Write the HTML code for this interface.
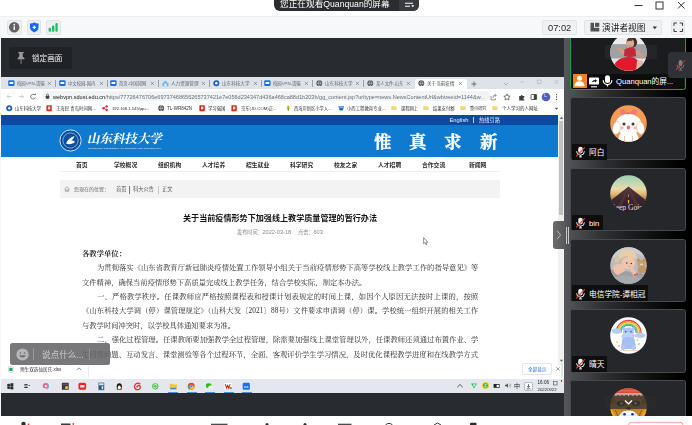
<!DOCTYPE html><html><head><meta charset="utf-8"><title>meeting</title><style>
html,body{margin:0;padding:0}
html{overflow:hidden}body{width:692px;height:425px;overflow:hidden;position:relative;background:#fff;font-family:"Liberation Sans",sans-serif}
#scr{position:absolute;left:0;top:0;width:692px;height:425px;filter:blur(.28px)}
#scr text{font-family:"Liberation Sans","Noto Sans CJK SC",sans-serif}
#scr text.sf{font-family:"Liberation Serif","Noto Serif CJK SC",serif}
</style></head><body><div id="scr"><div style="position:absolute;left:0px;top:0px;width:692px;height:16px;background:#ffffff;"></div>
<div style="position:absolute;left:0px;top:16px;width:692px;height:22px;background:#f7f8f9;border-top:1px solid #ededee;box-sizing:border-box"></div>
<div style="position:absolute;left:1px;top:38px;width:563px;height:378px;background:#282b2f;"></div>
<div style="position:absolute;left:0px;top:38px;width:1px;height:378px;background:#f6f7f8;"></div>
<div style="position:absolute;left:274px;top:-6px;width:145px;height:17px;background:#2b2c30;border-radius:6px"></div>
<div style="position:absolute;left:399px;top:-6px;width:20px;height:17px;background:#3a3b40;border-radius:0 6px 6px 0"></div>
<svg width="1" height="1" style="position:absolute;left:279.5px;top:6.7px;overflow:visible;"><text x="0" y="0" font-size="8.67" fill="#ffffff">您正在观看Quanquan的屏幕</text></svg>
<svg style="position:absolute;left:404px;top:1px;overflow:visible;" width="12" height="8" viewBox="0 0 12 8"><path d="M1 2.2h8M1 5.2h5" stroke="#fff" stroke-width="1.1" fill="none"/><path d="M7.2 4.3h3.2l-1.6 1.9z" fill="#fff"/></svg>
<svg style="position:absolute;left:632px;top:0px;overflow:visible;" width="60" height="14" viewBox="0 0 60 14"><path d="M2.5 5.5h8" stroke="#333" stroke-width="1"/><rect x="24" y="2" width="7" height="7" fill="none" stroke="#333" stroke-width="1"/><path d="M46 2l6.5 6.5M52.5 2L46 8.5" stroke="#333" stroke-width="1"/></svg>
<div style="position:absolute;left:7px;top:20px;width:14.5px;height:14.5px;background:#eeeff1;border:1px solid #e2e3e6;border-radius:2px;box-sizing:border-box"></div>
<div style="position:absolute;left:26.5px;top:20px;width:14.5px;height:14.5px;background:#eeeff1;border:1px solid #e2e3e6;border-radius:2px;box-sizing:border-box"></div>
<div style="position:absolute;left:46px;top:20px;width:14.5px;height:14.5px;background:#eeeff1;border:1px solid #e2e3e6;border-radius:2px;box-sizing:border-box"></div>
<svg style="position:absolute;left:7px;top:20px;overflow:visible;" width="14.5" height="14.5" viewBox="0 0 14.5 14.5"><circle cx="7.25" cy="7.25" r="5.200" fill="#626367"/><rect x="6.55" y="6.3" width="1.4" height="3.7" fill="#fff"/><circle cx="7.25" cy="4.7" r="0.85" fill="#fff"/></svg>
<svg style="position:absolute;left:26.5px;top:20px;overflow:visible;" width="14.5" height="14.5" viewBox="0 0 14.5 14.5"><path d="M7.25 2.3c1.6 1 3 1.3 4.3 1.3v3.6c0 2.6-2 4.3-4.3 5.2-2.300-.9-4.300-2.600-4.300-5.200V3.600c1.300 0 2.700-.3 4.300-1.300z" fill="#1268fb"/><path d="M7.25 5.6v3.400M5.550 7.300h3.400" stroke="#fff" stroke-width="1.2"/></svg>
<svg style="position:absolute;left:46px;top:20px;overflow:visible;" width="14.5" height="14.5" viewBox="0 0 14.5 14.5"><rect x="2.600" y="7.800" width="2.300" height="4" rx="1" fill="#10c65a"/><rect x="6" y="5.600" width="2.300" height="6.200" rx="1" fill="#10c65a"/><rect x="9.400" y="3" width="2.300" height="8.800" rx="1" fill="#10c65a"/></svg>
<div style="position:absolute;left:542px;top:20px;width:34.5px;height:14.5px;background:#f0f1f2;border:1px solid #e3e4e6;border-radius:2px;box-sizing:border-box"></div>
<div style="position:absolute;left:548px;top:23.6px;font:9.3px/9.3px 'Liberation Sans',sans-serif;color:#2c2c2e;white-space:nowrap;">07:02</div>
<div style="position:absolute;left:583.8px;top:20px;width:78.2px;height:14.5px;background:#f0f1f2;border:1px solid #e3e4e6;border-radius:2px;box-sizing:border-box"></div>
<svg style="position:absolute;left:589.5px;top:22px;overflow:visible;" width="10" height="10" viewBox="0 0 10 10"><path d="M.5.800h3.500v5h5.300v3.700H.5z" fill="#505257"/><rect x="5" y=".8" width="4.300" height="4" fill="#505257"/></svg>
<svg width="1" height="1" style="position:absolute;left:601.5px;top:30.7px;overflow:visible;"><text x="0" y="0" font-size="8.7" fill="#1c1c1e">演讲者视图</text></svg>
<svg style="position:absolute;left:651.5px;top:25.5px;overflow:visible;" width="6" height="4" viewBox="0 0 6 4"><path d="M.6.600h4.400L2.800 3.200z" fill="#333"/></svg>
<div style="position:absolute;left:670.5px;top:20px;width:14.5px;height:14.5px;background:#f0f1f2;border:1px solid #e3e4e6;border-radius:2px;box-sizing:border-box"></div>
<svg style="position:absolute;left:670.5px;top:20px;overflow:visible;" width="14.5" height="14.5" viewBox="0 0 14.5 14.5"><path d="M3 5.800V3.500c0-.3.200-.5.500-.5h2.300M8.700 3h2.300c.3 0 .5.200.5.500v2.300M11.500 8.700v2.300c0 .3-.2.500-.5.500H8.700M5.800 11.500H3.500c-.3 0-.5-.2-.5-.5V8.700" fill="none" stroke="#3a3b3f" stroke-width="1.100"/></svg>
<div style="position:absolute;left:9px;top:47px;width:63px;height:21.5px;background:#212225;border-radius:2.500px"></div>
<svg style="position:absolute;left:16px;top:50.5px;overflow:visible;" width="10" height="14" viewBox="0 0 10 14"><path d="M2.300 1h5.400v1.200H6.700v3.400l1.800 1.600v1H5.400v4.300L5 13.300l-.4-.8V8.200H1.500v-1l1.800-1.600V2.200H2.300z" fill="#9a9b9e"/></svg>
<svg width="1" height="1" style="position:absolute;left:31.8px;top:60.8px;overflow:visible;"><text x="0" y="0" font-size="7.6" fill="#f0f0f0">锁定画面</text></svg>
<div id="share" style="position:absolute;left:1px;top:77px;width:563px;height:316px;background:#fff;overflow:hidden;filter:blur(.3px)">
<div style="position:absolute;left:0px;top:0px;width:563px;height:12px;background:#dee2e9;"></div>
<div style="position:absolute;left:414px;top:1.5px;width:51.5px;height:10.5px;background:#ffffff;border-radius:3px 3px 0 0"></div>
<svg style="position:absolute;left:6.8px;top:3px;overflow:visible;" width="7" height="6.5" viewBox="0 0 7 6.5"><rect x=".2" y=".2" width="6.400" height="5.800" rx="1.200" fill="#1d6fd6"/><rect x="1.500" y="1.900" width="3.800" height="2.100" rx=".3" fill="#fff"/></svg>
<svg width="1" height="1" style="position:absolute;left:15.8px;top:8.3px;overflow:visible;"><text x="0" y="0" font-size="4.34" fill="#62666c">校园VPN-请输</text></svg>
<svg style="position:absolute;left:46.3px;top:4px;overflow:visible;" width="5" height="5" viewBox="0 0 5 5"><path d="M.8.800l3.200 3.200M4 .8L.8 4" stroke="#6a6e75" stroke-width=".6"/></svg>
<div style="position:absolute;left:54.3px;top:2.5px;width:0.5px;height:7px;background:#9aa0a8;"></div>
<svg style="position:absolute;left:58.1px;top:3px;overflow:visible;" width="7" height="6.5" viewBox="0 0 7 6.5"><rect x=".2" y=".2" width="6.400" height="5.800" rx="1.200" fill="#1d6fd6"/><rect x="1.500" y="1.900" width="3.800" height="2.100" rx=".3" fill="#fff"/></svg>
<svg width="1" height="1" style="position:absolute;left:67.1px;top:8.3px;overflow:visible;"><text x="0" y="0" font-size="4.32" fill="#62666c">中文校园-国内</text></svg>
<svg style="position:absolute;left:97.6px;top:4px;overflow:visible;" width="5" height="5" viewBox="0 0 5 5"><path d="M.8.800l3.200 3.200M4 .8L.8 4" stroke="#6a6e75" stroke-width=".6"/></svg>
<div style="position:absolute;left:105.6px;top:2.5px;width:0.5px;height:7px;background:#9aa0a8;"></div>
<svg style="position:absolute;left:109.4px;top:3px;overflow:visible;" width="7" height="6.5" viewBox="0 0 7 6.5"><rect x=".2" y=".2" width="6.400" height="5.800" rx="1.200" fill="#1d6fd6"/><rect x="1.500" y="1.900" width="3.800" height="2.100" rx=".3" fill="#fff"/></svg>
<svg width="1" height="1" style="position:absolute;left:118.4px;top:8.3px;overflow:visible;"><text x="0" y="0" font-size="4.32" fill="#62666c">首页-中国知网</text></svg>
<svg style="position:absolute;left:148.9px;top:4px;overflow:visible;" width="5" height="5" viewBox="0 0 5 5"><path d="M.8.800l3.200 3.200M4 .8L.8 4" stroke="#6a6e75" stroke-width=".6"/></svg>
<div style="position:absolute;left:156.9px;top:2.5px;width:0.5px;height:7px;background:#9aa0a8;"></div>
<svg style="position:absolute;left:160.7px;top:3px;overflow:visible;" width="7" height="6.5" viewBox="0 0 7 6.5"><path d="M.4 3.400L3.400.5l3 2.900v2.800H.4z" fill="#6db4e8"/><rect x="2.400" y="3.500" width="2" height="2.700" fill="#e8f4fc"/></svg>
<svg width="1" height="1" style="position:absolute;left:169.7px;top:8.3px;overflow:visible;"><text x="0" y="0" font-size="4.58" fill="#62666c">人力资源管理</text></svg>
<svg style="position:absolute;left:200.2px;top:4px;overflow:visible;" width="5" height="5" viewBox="0 0 5 5"><path d="M.8.800l3.200 3.200M4 .8L.8 4" stroke="#6a6e75" stroke-width=".6"/></svg>
<div style="position:absolute;left:208.2px;top:2.5px;width:0.5px;height:7px;background:#9aa0a8;"></div>
<svg style="position:absolute;left:212px;top:3px;overflow:visible;" width="7" height="6.5" viewBox="0 0 7 6.5"><circle cx="3.300" cy="3.200" r="3" fill="#1a5fc4"/><circle cx="3.300" cy="3.200" r="1.300" fill="#fff"/></svg>
<svg width="1" height="1" style="position:absolute;left:221px;top:8.3px;overflow:visible;"><text x="0" y="0" font-size="4.58" fill="#62666c">山东科技大学</text></svg>
<svg style="position:absolute;left:251.5px;top:4px;overflow:visible;" width="5" height="5" viewBox="0 0 5 5"><path d="M.8.800l3.200 3.200M4 .8L.8 4" stroke="#6a6e75" stroke-width=".6"/></svg>
<div style="position:absolute;left:259.5px;top:2.5px;width:0.5px;height:7px;background:#9aa0a8;"></div>
<svg style="position:absolute;left:263.3px;top:3px;overflow:visible;" width="7" height="6.5" viewBox="0 0 7 6.5"><rect x=".2" y=".2" width="6.400" height="5.800" rx="1.200" fill="#1d6fd6"/><rect x="1.500" y="1.900" width="3.800" height="2.100" rx=".3" fill="#fff"/></svg>
<svg width="1" height="1" style="position:absolute;left:272.3px;top:8.3px;overflow:visible;"><text x="0" y="0" font-size="4.34" fill="#62666c">校园VPN-请输</text></svg>
<svg style="position:absolute;left:302.8px;top:4px;overflow:visible;" width="5" height="5" viewBox="0 0 5 5"><path d="M.8.800l3.200 3.200M4 .8L.8 4" stroke="#6a6e75" stroke-width=".6"/></svg>
<div style="position:absolute;left:310.8px;top:2.5px;width:0.5px;height:7px;background:#9aa0a8;"></div>
<svg style="position:absolute;left:314.6px;top:3px;overflow:visible;" width="7" height="6.5" viewBox="0 0 7 6.5"><circle cx="3.300" cy="3.200" r="2.900" fill="#4a4d52"/><path d="M.8 3.200h5M3.300.5c-1.500 1.500-1.500 4 0 5.400M3.300.5c1.500 1.500 1.500 4 0 5.400" stroke="#e8eaee" stroke-width=".5" fill="none"/></svg>
<svg width="1" height="1" style="position:absolute;left:323.6px;top:8.3px;overflow:visible;"><text x="0" y="0" font-size="4.58" fill="#62666c">山东科技大学</text></svg>
<svg style="position:absolute;left:354.1px;top:4px;overflow:visible;" width="5" height="5" viewBox="0 0 5 5"><path d="M.8.800l3.200 3.200M4 .8L.8 4" stroke="#6a6e75" stroke-width=".6"/></svg>
<div style="position:absolute;left:362.1px;top:2.5px;width:0.5px;height:7px;background:#9aa0a8;"></div>
<svg style="position:absolute;left:365.9px;top:3px;overflow:visible;" width="7" height="6.5" viewBox="0 0 7 6.5"><circle cx="3.300" cy="3.200" r="2.900" fill="#4a4d52"/><path d="M.8 3.200h5M3.300.5c-1.500 1.500-1.500 4 0 5.400M3.300.5c1.500 1.500 1.500 4 0 5.400" stroke="#e8eaee" stroke-width=".5" fill="none"/></svg>
<svg width="1" height="1" style="position:absolute;left:374.9px;top:8.3px;overflow:visible;"><text x="0" y="0" font-size="4.32" fill="#62666c">某人文件-山东</text></svg>
<svg style="position:absolute;left:405.4px;top:4px;overflow:visible;" width="5" height="5" viewBox="0 0 5 5"><path d="M.8.800l3.200 3.200M4 .8L.8 4" stroke="#6a6e75" stroke-width=".6"/></svg>
<svg style="position:absolute;left:417.2px;top:3px;overflow:visible;" width="7" height="6.5" viewBox="0 0 7 6.5"><circle cx="3.300" cy="3.200" r="2.900" fill="#4a4d52"/><path d="M.8 3.200h5M3.300.5c-1.500 1.500-1.500 4 0 5.400M3.300.5c1.500 1.500 1.500 4 0 5.400" stroke="#e8eaee" stroke-width=".5" fill="none"/></svg>
<svg width="1" height="1" style="position:absolute;left:426.2px;top:8.3px;overflow:visible;"><text x="0" y="0" font-size="4.58" fill="#3a3d42">关于当前疫情</text></svg>
<svg style="position:absolute;left:456.7px;top:4px;overflow:visible;" width="5" height="5" viewBox="0 0 5 5"><path d="M.8.800l3.200 3.200M4 .8L.8 4" stroke="#6a6e75" stroke-width=".6"/></svg>
<svg style="position:absolute;left:470px;top:3.5px;overflow:visible;" width="6" height="6" viewBox="0 0 6 6"><path d="M3 .5v5M.5 3h5" stroke="#555" stroke-width=".8"/></svg>
<svg style="position:absolute;left:501.5px;top:4.5px;overflow:visible;" width="6" height="4" viewBox="0 0 6 4"><path d="M.8.800l2.200 2.200L5.200.8" stroke="#9aa0a8" stroke-width=".7" fill="none"/></svg>
<svg style="position:absolute;left:517px;top:2px;overflow:visible;" width="44" height="6" viewBox="0 0 44 6"><path d="M2 3h4" stroke="#a9aeb6" stroke-width=".6"/><rect x="19.500" y="1" width="3.600" height="3.600" fill="none" stroke="#a9aeb6" stroke-width=".6"/><path d="M36.500 1l4 4M40.500 1l-4 4" stroke="#a9aeb6" stroke-width=".6"/></svg>
<div style="position:absolute;left:0px;top:12px;width:563px;height:13.5px;background:#ffffff;"></div>
<div style="position:absolute;left:40.5px;top:14.3px;width:448px;height:10px;background:#f1f3f4;border-radius:5px"></div>
<svg style="position:absolute;left:4px;top:15px;overflow:visible;" width="36" height="9" viewBox="0 0 36 9"><path d="M6.500 4.500H2.200M4 2.500L2 4.500l2 2" stroke="#c2c5ca" stroke-width=".8" fill="none"/><path d="M14 4.500h4.300M16.500 2.500l2 2-2 2" stroke="#c2c5ca" stroke-width=".8" fill="none"/><path d="M30 3.200a2.400 2.400 0 1 0 .4 2.100" stroke="#55595e" stroke-width=".75" fill="none"/><path d="M29 3h1.800V1.200z" fill="#55595e"/></svg>
<svg style="position:absolute;left:44px;top:16px;overflow:visible;" width="5" height="7" viewBox="0 0 5 7"><rect x=".8" y="2.800" width="3.400" height="2.900" rx=".4" fill="#3c4043"/><path d="M1.500 2.900V2a1 1 0 0 1 2 0v.9" stroke="#3c4043" stroke-width=".6" fill="none"/></svg>
<svg style="position:absolute;left:51.5px;top:14.5px;overflow:visible" width="440" height="10"><text x="0" y="6.600" font-family="Liberation Sans,sans-serif" font-size="5.900" textLength="432" lengthAdjust="spacingAndGlyphs"><tspan fill="#202124">webvpn.sdust.edu.cn</tspan><tspan fill="#6a6e74">/htt</tspan><tspan fill="#6a6e74">ps/77726476706e69737468656265737421e7e056d234347d436a468ca88d1b203b/gg_content.jsp?urltype=news.NewsContentUrl&amp;wbtreeid=1144&amp;w...</tspan></text></svg>
<svg style="position:absolute;left:489px;top:15.5px;overflow:visible;" width="8" height="8" viewBox="0 0 8 8"><path d="M1 3.200v3.600h4.500V5.500M3.200 5V3.400c0-.6.400-1 1-1h1.600M4.800 1l1.400 1.400L4.800 3.800" stroke="#5f6368" stroke-width=".7" fill="none"/></svg>
<svg style="position:absolute;left:501.5px;top:15.5px;overflow:visible;" width="8" height="8" viewBox="0 0 8 8"><path d="M4 .9l.95 2.100 2.250.25-1.700 1.500.5 2.250L4 5.850 2 7l.5-2.250-1.700-1.500 2.250-.25z" stroke="#44474c" stroke-width=".7" fill="none"/></svg>
<svg style="position:absolute;left:516.5px;top:15.5px;overflow:visible;" width="8" height="8" viewBox="0 0 8 8"><path d="M1.200 3h1.600a.9.900 0 1 1 1.800 0h1.700v1.600a.9.900 0 1 0 0 1.800V7.400H1.200z" fill="#3c4043"/></svg>
<svg style="position:absolute;left:528.5px;top:15.5px;overflow:visible;" width="8" height="8" viewBox="0 0 8 8"><rect x="1" y="1.500" width="5.600" height="5" rx=".6" fill="none" stroke="#3c4043" stroke-width=".8"/><rect x="3.800" y="1.500" width="2.800" height="5" fill="#3c4043"/></svg>
<svg style="position:absolute;left:539.5px;top:14.5px;overflow:visible;" width="10" height="10" viewBox="0 0 10 10"><circle cx="5" cy="5" r="4.300" fill="#4f5ec4"/></svg>
<div style="position:absolute;left:543.3px;top:17px;font:4.8px/4.8px 'Liberation Sans',sans-serif;color:#e8eaf6;white-space:nowrap;">L</div>
<svg style="position:absolute;left:554px;top:15.5px;overflow:visible;" width="3" height="8" viewBox="0 0 3 8"><circle cx="1.500" cy="1.600" r=".65" fill="#44474c"/><circle cx="1.500" cy="4" r=".65" fill="#44474c"/><circle cx="1.500" cy="6.400" r=".65" fill="#44474c"/></svg>
<div style="position:absolute;left:0px;top:25.5px;width:563px;height:12px;background:#ffffff;"></div>
<svg style="position:absolute;left:5px;top:28px;overflow:visible;" width="6.5" height="6.5" viewBox="0 0 6.5 6.5"><circle cx="3.200" cy="3.200" r="3" fill="#1a5fc4"/><circle cx="3.200" cy="3.200" r="1.200" fill="#fff"/></svg>
<svg width="1" height="1" style="position:absolute;left:14px;top:33.3px;overflow:visible;"><text x="0" y="0" font-size="4.34" fill="#2e3135">山东科技大学</text></svg>
<svg style="position:absolute;left:45px;top:28px;overflow:visible;" width="6.5" height="6.5" viewBox="0 0 6.5 6.5"><rect x=".4" y=".2" width="5.400" height="6" rx=".4" fill="#e02b20"/><rect x="2" y="1.600" width="2.200" height="2.800" fill="#fff" opacity=".85"/></svg>
<svg width="1" height="1" style="position:absolute;left:55px;top:33.3px;overflow:visible;"><text x="0" y="0" font-size="4.38" fill="#2e3135">王海民 青岛时间网...</text></svg>
<svg style="position:absolute;left:101px;top:28px;overflow:visible;" width="6.5" height="6.5" viewBox="0 0 6.5 6.5"><circle cx="1.500" cy="3.200" r="1.200" fill="#e03030"/><circle cx="4.700" cy="1.400" r="1.200" fill="#e03030"/><circle cx="4.700" cy="5" r="1.200" fill="#e03030"/><path d="M1.500 3.200L4.700 1.400M1.500 3.200L4.700 5" stroke="#e03030" stroke-width=".8"/></svg>
<svg width="1" height="1" style="position:absolute;left:111px;top:33.3px;overflow:visible;"><text x="0" y="0" font-size="4.2" fill="#2e3135">192.168.1.145/jqu...</text></svg>
<svg style="position:absolute;left:157px;top:28px;overflow:visible;" width="6.5" height="6.5" viewBox="0 0 6.5 6.5"><circle cx="3.200" cy="3.200" r="2.900" fill="#3c4043"/><path d="M.6 3.200h5.200M3.200.4c-1.400 1.400-1.400 4 0 5.600M3.200.4c1.400 1.400 1.400 4 0 5.600" stroke="#fff" stroke-width=".5" fill="none"/></svg>
<svg width="1" height="1" style="position:absolute;left:166px;top:33.3px;overflow:visible;"><text x="0" y="0" font-size="4.52" fill="#2e3135">TL-WR842N</text></svg>
<svg style="position:absolute;left:198px;top:28px;overflow:visible;" width="6.5" height="6.5" viewBox="0 0 6.5 6.5"><rect x=".4" y=".2" width="5.400" height="6" rx=".4" fill="#d9241b"/><rect x="2" y="1.600" width="2.200" height="2.800" fill="#fff" opacity=".85"/></svg>
<svg width="1" height="1" style="position:absolute;left:207px;top:33.3px;overflow:visible;"><text x="0" y="0" font-size="4.38" fill="#2e3135">学习强国</text></svg>
<svg style="position:absolute;left:230px;top:28px;overflow:visible;" width="6.5" height="6.5" viewBox="0 0 6.5 6.5"><rect x=".4" y=".2" width="5.400" height="6" rx=".4" fill="#d62c25"/><rect x="2" y="1.600" width="2.200" height="2.800" fill="#fff" opacity=".85"/></svg>
<svg width="1" height="1" style="position:absolute;left:240px;top:33.3px;overflow:visible;"><text x="0" y="0" font-size="4.28" fill="#2e3135">京东(JD.COM)正...</text></svg>
<svg style="position:absolute;left:284px;top:28px;overflow:visible;" width="6.5" height="6.5" viewBox="0 0 6.5 6.5"><path d="M3.200.3c1.600 1.200 2 3.500 0 5.900-2-2.400-1.600-4.700 0-5.900z" fill="#f4b400"/><path d="M3.200 2.500c1 .8 1.200 2.200 0 3.700z" fill="#33a853"/></svg>
<svg width="1" height="1" style="position:absolute;left:293px;top:33.3px;overflow:visible;"><text x="0" y="0" font-size="4.28" fill="#2e3135">西海岸新区小学入...</text></svg>
<svg style="position:absolute;left:337px;top:28px;overflow:visible;" width="6.5" height="6.5" viewBox="0 0 6.5 6.5"><path d="M.4 1.200h5.600L4.800 5.600H1.600z" fill="#1f6fd0"/><path d="M1.500 2.300h3.400" stroke="#fff" stroke-width=".6"/></svg>
<svg width="1" height="1" style="position:absolute;left:346px;top:33.3px;overflow:visible;"><text x="0" y="0" font-size="4.38" fill="#2e3135">小西工程教育专业...</text></svg>
<svg style="position:absolute;left:390px;top:28px;overflow:visible;" width="6" height="5.5" viewBox="0 0 6 5.5"><path d="M.3.900h2l.6.700h2.700v3.500H.3z" fill="#f4d678"/></svg>
<svg width="1" height="1" style="position:absolute;left:400px;top:33.3px;overflow:visible;"><text x="0" y="0" font-size="4.26" fill="#2e3135">课程网上</text></svg>
<svg style="position:absolute;left:422px;top:28px;overflow:visible;" width="6" height="5.5" viewBox="0 0 6 5.5"><path d="M.3.900h2l.6.700h2.700v3.500H.3z" fill="#f4d678"/></svg>
<svg width="1" height="1" style="position:absolute;left:432px;top:33.3px;overflow:visible;"><text x="0" y="0" font-size="4.3" fill="#2e3135">结果支付额</text></svg>
<svg style="position:absolute;left:459px;top:28px;overflow:visible;" width="6" height="5.5" viewBox="0 0 6 5.5"><path d="M.3.900h2l.6.700h2.700v3.500H.3z" fill="#f4d678"/></svg>
<svg width="1" height="1" style="position:absolute;left:469px;top:33.3px;overflow:visible;"><text x="0" y="0" font-size="4.12" fill="#2e3135">重点研究</text></svg>
<svg style="position:absolute;left:491px;top:28px;overflow:visible;" width="6" height="5.5" viewBox="0 0 6 5.5"><path d="M.3.900h2l.6.700h2.700v3.500H.3z" fill="#f4d678"/></svg>
<svg width="1" height="1" style="position:absolute;left:501px;top:33.3px;overflow:visible;"><text x="0" y="0" font-size="4.5" fill="#2e3135">个人学习的人网址</text></svg>
<svg style="position:absolute;left:552.5px;top:29.5px;overflow:visible;" width="5" height="4" viewBox="0 0 5 4"><path d="M.6.700h3.600L2.400 3z" fill="#5f6368"/></svg>
<div style="position:absolute;left:0px;top:37.5px;width:557px;height:10px;background:#0c4aa0;"></div>
<div style="position:absolute;left:0px;top:47.5px;width:557px;height:32px;background:#0e7bd0;"></div>
<div style="position:absolute;left:557px;top:37.5px;width:6px;height:250px;background:#f1f1f1;"></div>
<div style="position:absolute;left:557.7px;top:44px;width:4.7px;height:94px;background:#c1c1c2;"></div>
<svg style="position:absolute;left:557.5px;top:38.5px;overflow:visible;" width="5" height="4" viewBox="0 0 5 4"><path d="M.8 3L2.500.8 4.200 3z" fill="#6a6a6a"/></svg>
<svg style="position:absolute;left:557.5px;top:281.5px;overflow:visible;" width="5" height="4" viewBox="0 0 5 4"><path d="M.8.800h3.400L2.500 3z" fill="#6a6a6a"/></svg>
<div style="position:absolute;left:448.5px;top:39.7px;font:5.800px/6px 'Liberation Sans',sans-serif;color:#e6eefb;white-space:nowrap">English</div>
<div style="position:absolute;left:472px;top:40px;width:0.6px;height:5.5px;background:#bcd0ee;"></div>
<svg width="1" height="1" style="position:absolute;left:478px;top:44.8px;overflow:visible;"><text x="0" y="0" font-size="5.24" fill="#dfe9f8">热线引路</text></svg>
<svg style="position:absolute;left:58px;top:52px;overflow:visible;" width="23" height="23" viewBox="0 0 23 23"><circle cx="11.500" cy="11.500" r="10.600" fill="#0b509e" stroke="#dfeaf8" stroke-width=".9"/><circle cx="11.500" cy="11.500" r="7.600" fill="none" stroke="#cfe0f4" stroke-width=".6"/><path d="M7 14.500c2-4.500 5-6.500 8.500-7.500-1 2-1.500 3.500-3.500 4.500 2 0 3 .3 4 1.500-2.500 2-5.500 2.800-9 1.500z" fill="#fff"/></svg>
<svg width="1" height="1" style="position:absolute;left:85.5px;top:66.3px;overflow:visible;transform:skewX(-12deg);transform-origin:0 0"><text class="sf" x="0" y="0" font-size="12.5" font-weight="bold" fill="#ffffff">山东科技大学</text></svg>
<div style="position:absolute;left:87px;top:69.8px;font:bold 2.300px/3px 'Liberation Sans',sans-serif;color:#d8e6f7;white-space:nowrap;letter-spacing:.2px">SHANDONG UNIVERSITY OF SCIENCE AND TECHNOLOGY</div>
<svg width="1" height="1" style="position:absolute;left:373px;top:71px;overflow:visible;"><text class="sf" x="0" y="0" font-size="17.5" font-weight="bold" fill="#ffffff" stroke="#ffffff" stroke-width=".3">惟</text></svg>
<svg width="1" height="1" style="position:absolute;left:408.2px;top:71px;overflow:visible;"><text class="sf" x="0" y="0" font-size="17.5" font-weight="bold" fill="#ffffff" stroke="#ffffff" stroke-width=".3">真</text></svg>
<svg width="1" height="1" style="position:absolute;left:443.4px;top:71px;overflow:visible;"><text class="sf" x="0" y="0" font-size="17.5" font-weight="bold" fill="#ffffff" stroke="#ffffff" stroke-width=".3">求</text></svg>
<svg width="1" height="1" style="position:absolute;left:478.6px;top:71px;overflow:visible;"><text class="sf" x="0" y="0" font-size="17.5" font-weight="bold" fill="#ffffff" stroke="#ffffff" stroke-width=".3">新</text></svg>
<div style="position:absolute;left:0px;top:79.5px;width:557px;height:14.5px;background:#ffffff;"></div>
<div style="position:absolute;left:59px;top:94px;width:440px;height:0.7px;background:#f1f1f1;"></div>
<svg width="1" height="1" style="position:absolute;left:75px;top:90.2px;overflow:visible;"><text x="0" y="0" font-size="5.8" font-weight="bold" fill="#2b2b2b">首页</text></svg>
<svg width="1" height="1" style="position:absolute;left:113px;top:90.2px;overflow:visible;"><text x="0" y="0" font-size="5.8" font-weight="bold" fill="#2b2b2b">学校概况</text></svg>
<svg width="1" height="1" style="position:absolute;left:157px;top:90.2px;overflow:visible;"><text x="0" y="0" font-size="5.8" font-weight="bold" fill="#2b2b2b">组织机构</text></svg>
<svg width="1" height="1" style="position:absolute;left:201px;top:90.2px;overflow:visible;"><text x="0" y="0" font-size="5.8" font-weight="bold" fill="#2b2b2b">人才培养</text></svg>
<svg width="1" height="1" style="position:absolute;left:245px;top:90.2px;overflow:visible;"><text x="0" y="0" font-size="5.8" font-weight="bold" fill="#2b2b2b">招生就业</text></svg>
<svg width="1" height="1" style="position:absolute;left:289px;top:90.2px;overflow:visible;"><text x="0" y="0" font-size="5.8" font-weight="bold" fill="#2b2b2b">科学研究</text></svg>
<svg width="1" height="1" style="position:absolute;left:333px;top:90.2px;overflow:visible;"><text x="0" y="0" font-size="5.8" font-weight="bold" fill="#2b2b2b">校友之家</text></svg>
<svg width="1" height="1" style="position:absolute;left:377px;top:90.2px;overflow:visible;"><text x="0" y="0" font-size="5.8" font-weight="bold" fill="#2b2b2b">人才招聘</text></svg>
<svg width="1" height="1" style="position:absolute;left:421px;top:90.2px;overflow:visible;"><text x="0" y="0" font-size="5.8" font-weight="bold" fill="#2b2b2b">合作交流</text></svg>
<svg width="1" height="1" style="position:absolute;left:468px;top:90.2px;overflow:visible;"><text x="0" y="0" font-size="5.8" font-weight="bold" fill="#2b2b2b">新闻网</text></svg>
<div style="position:absolute;left:59px;top:103px;width:439.5px;height:17.5px;background:#f3f3f4;"></div>
<svg style="position:absolute;left:63px;top:109px;overflow:visible;" width="6" height="6" viewBox="0 0 6 6"><path d="M.6 3L3 .8 5.400 3M1.300 2.800v2.500h1.200V3.800h1v1.500h1.200V2.800" stroke="#777" stroke-width=".55" fill="none"/></svg>
<svg width="1" height="1" style="position:absolute;left:73px;top:114.2px;overflow:visible;"><text x="0" y="0" font-size="5" fill="#6b6b6b">您现在的位置：</text></svg>
<svg width="1" height="1" style="position:absolute;left:114.5px;top:114.2px;overflow:visible;"><text x="0" y="0" font-size="5.25" fill="#555">首页</text></svg>
<div style="position:absolute;left:127.8px;top:108.5px;width:0.7px;height:8px;background:#7a7a7a;"></div>
<svg width="1" height="1" style="position:absolute;left:131.6px;top:114.2px;overflow:visible;"><text x="0" y="0" font-size="5.25" fill="#555">科大公告</text></svg>
<div style="position:absolute;left:156.7px;top:108.5px;width:0.7px;height:8px;background:#c8c8c8;"></div>
<svg width="1" height="1" style="position:absolute;left:160.6px;top:114.2px;overflow:visible;"><text x="0" y="0" font-size="5.25" fill="#555">正文</text></svg>
<svg width="1" height="1" style="position:absolute;left:182px;top:144px;overflow:visible;"><text x="0" y="0" font-size="8.08" font-weight="bold" fill="#141414" textLength="194" lengthAdjust="spacing">关于当前疫情形势下加强线上教学质量管理的暂行办法</text></svg>
<svg width="1" height="1" style="position:absolute;left:236px;top:156.6px;overflow:visible;"><text x="0" y="0" font-size="5.14" fill="#8a8a8a">发布时间：</text></svg>
<div style="position:absolute;left:261.5px;top:151.7px;font:5.600px/6px 'Liberation Sans',sans-serif;color:#8a8a8a;white-space:nowrap">2022-03-18</div>
<svg width="1" height="1" style="position:absolute;left:297px;top:156.6px;overflow:visible;"><text x="0" y="0" font-size="5.28" fill="#8a8a8a">点击：</text></svg>
<div style="position:absolute;left:312.5px;top:151.7px;font:5.600px/6px 'Liberation Sans',sans-serif;color:#8a8a8a;white-space:nowrap">603</div>
<svg width="1" height="1" style="position:absolute;left:81px;top:179px;overflow:visible;"><text class="sf" x="0" y="0" font-size="7.34" font-weight="bold" fill="#1c1c1c">各教学单位：</text></svg>
<svg width="1" height="1" style="position:absolute;left:95.66px;top:193.05px;overflow:visible;"><text class="sf" x="0" y="0" font-size="7.33" fill="#2a2a2a" textLength="381.4" lengthAdjust="spacing">为贯彻落实《山东省教育厅新冠肺炎疫情处置工作领导小组关于当前疫情形势下高等学校线上教学工作的指导意见》等</text></svg>
<svg width="1" height="1" style="position:absolute;left:81px;top:207.5px;overflow:visible;"><text class="sf" x="0" y="0" font-size="7.29" fill="#2a2a2a" textLength="284.4" lengthAdjust="spacing">文件精神，确保当前疫情形势下高质量完成线上教学任务，结合学校实际，制定本办法。</text></svg>
<svg width="1" height="1" style="position:absolute;left:95.66px;top:221.95px;overflow:visible;"><text class="sf" x="0" y="0" font-size="7.34" fill="#2a2a2a" textLength="381.2" lengthAdjust="spacing">一、严格教学秩序。任课教师应严格按照课程表和授课计划表规定的时间上课，如因个人原因无法按时上课的，按照</text></svg>
<svg width="1" height="1" style="position:absolute;left:81px;top:236.4px;overflow:visible;"><text class="sf" x="0" y="0" font-size="7.3" fill="#2a2a2a" textLength="396.1" lengthAdjust="spacing">《山东科技大学调（停）课管理规定》（山科大发〔2021〕88号）文件要求申请调（停）课。学校统一组织开展的相关工作</text></svg>
<svg width="1" height="1" style="position:absolute;left:81px;top:250.85px;overflow:visible;"><text class="sf" x="0" y="0" font-size="7.29" fill="#2a2a2a" textLength="153.1" lengthAdjust="spacing">与教学时间冲突时，以学校具体通知要求为准。</text></svg>
<svg width="1" height="1" style="position:absolute;left:95.66px;top:265.3px;overflow:visible;"><text class="sf" x="0" y="0" font-size="7.33" fill="#2a2a2a" textLength="381.4" lengthAdjust="spacing">二、强化过程管理。任课教师要加强教学全过程管理，除需要加强线上课堂管理以外，任课教师还须通过布置作业、学</text></svg>
<svg width="1" height="1" style="position:absolute;left:81px;top:279.75px;overflow:visible;"><text class="sf" x="0" y="0" font-size="7.33" fill="#2a2a2a" textLength="396" lengthAdjust="spacing">生回答问题、互动发言、课堂测验等各个过程环节，全面、客观评价学生学习情况，及时优化课程教学进度和在线教学方式</text></svg>
<svg style="position:absolute;left:422px;top:159.5px;overflow:visible;" width="6" height="9" viewBox="0 0 6 9"><path d="M.6.600v6.200l1.500-1.300 1 2.200.9-.4-1-2.100h1.900z" fill="#fff" stroke="#333" stroke-width=".5"/></svg>
<div style="position:absolute;left:0px;top:287.5px;width:563px;height:14px;background:#ffffff;"></div>
<div style="position:absolute;left:559.8px;top:285.6px;width:2.4px;height:14px;background:#d8ecdb;"></div>
<svg style="position:absolute;left:6.5px;top:288.8px;overflow:visible;" width="6" height="7" viewBox="0 0 6 7"><rect x=".5" y=".5" width="4.800" height="5.800" rx=".6" fill="#fff" stroke="#9aa" stroke-width=".4"/><rect x="1.300" y="1.800" width="3.200" height="3.200" fill="#1fa463"/></svg>
<svg width="1" height="1" style="position:absolute;left:18.5px;top:293.8px;overflow:visible;"><text x="0" y="0" font-size="4.6" fill="#333">师生双选仙居氏.xlsx</text></svg>
<svg style="position:absolute;left:75px;top:290.3px;overflow:visible;" width="6" height="4" viewBox="0 0 6 4"><path d="M.8 3L3 .9 5.200 3" stroke="#555" stroke-width=".7" fill="none"/></svg>
<div style="position:absolute;left:87px;top:288.5px;width:0.6px;height:12px;background:#ebebeb;"></div>
<div style="position:absolute;left:521px;top:285.5px;width:29.5px;height:12.5px;background:#ffffff;border:.7px solid #e1e5ee;border-radius:2px;box-sizing:border-box"></div>
<svg width="1" height="1" style="position:absolute;left:526.5px;top:293.8px;overflow:visible;"><text x="0" y="0" font-size="4.62" fill="#1a66d6">全部显示</text></svg>
<svg style="position:absolute;left:553.7px;top:289.2px;overflow:visible;" width="6" height="6" viewBox="0 0 6 6"><path d="M1.300 1.300l3.400 3.400M4.700 1.300L1.300 4.700" stroke="#666" stroke-width=".6"/></svg>
<div style="position:absolute;left:0px;top:301.7px;width:563px;height:14.5px;background:#e4e8ee;"></div>
<svg style="position:absolute;left:5.2px;top:304.8px;overflow:visible" width="8.600" height="8.600" viewBox="0 0 10 10"><path d="M1.500 2.300l3-.4v2.900h-3zM5 1.800l3.500-.5v3.500H5zM1.500 5.300h3v2.900l-3-.4zM5 5.300h3.500v3.500L5 8.300z" fill="#2b2b2b"/></svg>
<svg style="position:absolute;left:22.2px;top:304.8px;overflow:visible" width="8.600" height="8.600" viewBox="0 0 10 10"><rect x="1.500" y="2.500" width="4" height="1.500" fill="#333"/><rect x="1.500" y="5.500" width="4" height="1.500" fill="#333"/><rect x="6.500" y="3.500" width="1.500" height="1" fill="#333"/></svg>
<svg style="position:absolute;left:40.7px;top:304.8px;overflow:visible" width="8.600" height="8.600" viewBox="0 0 10 10"><circle cx="4" cy="4.500" r="3.200" fill="#ee6a7a"/><path d="M4.500 1c2 0 3.700 1.600 3.700 3.800S6.500 8.800 5 8.800C7 7.500 7 3.500 4.500 1z" fill="#58b6e8"/><circle cx="4.500" cy="4.700" r="1.300" fill="#fff"/></svg>
<svg style="position:absolute;left:59.7px;top:304.8px;overflow:visible" width="8.600" height="8.600" viewBox="0 0 10 10"><rect x="1" y="1" width="8" height="8" rx=".6" fill="#3a3a3a"/><rect x="5" y="5" width="3" height="3" fill="#f6d23c"/><rect x="2" y="2.200" width="6" height=".9" fill="#6a6a6a"/></svg>
<svg style="position:absolute;left:77.2px;top:304.8px;overflow:visible" width="8.600" height="8.600" viewBox="0 0 10 10"><rect x=".5" y="1" width="9" height="8" rx="2" fill="#f5222d"/><rect x="2.500" y="3.500" width="5" height="3" rx=".5" fill="#fff" opacity=".9"/></svg>
<svg style="position:absolute;left:95.7px;top:304.8px;overflow:visible" width="8.600" height="8.600" viewBox="0 0 10 10"><rect x="1.500" y=".6" width="7" height="9" rx=".5" fill="#4d7ea8"/><rect x="2.500" y="1.600" width="5" height="2" fill="#dbe8f2"/><rect x="2.500" y="4.500" width="5" height="4" fill="#2d4c66"/><rect x="5.300" y="5" width="1.800" height="3" fill="#e8eef2"/></svg>
<svg style="position:absolute;left:113.7px;top:304.8px;overflow:visible" width="8.600" height="8.600" viewBox="0 0 10 10"><ellipse cx="5" cy="5.300" rx="3" ry="3.800" fill="#1a1a1a"/><ellipse cx="5" cy="6.500" rx="1.800" ry="2.200" fill="#fff"/><path d="M2 7.500c1.500 1.200 4.500 1.200 6 0l.3 1.200c-2 1-4.600 1-6.600 0z" fill="#e63a2e"/><ellipse cx="5" cy="4.300" rx="1.100" ry=".5" fill="#f5a623"/></svg>
<svg style="position:absolute;left:131.7px;top:304.8px;overflow:visible" width="8.600" height="8.600" viewBox="0 0 10 10"><path d="M8.500 2.500C7 1.300 4.500 1 2.800 2.800 1 4.600 1.500 7.500 3.500 8.500s4.500.3 5-2c.3-1.500-1-2.600-2.400-2.400C4.800 4.300 4.300 5.600 5 6.500" stroke="#e8252a" stroke-width="1.500" fill="none"/></svg>
<svg style="position:absolute;left:150.2px;top:304.8px;overflow:visible" width="8.600" height="8.600" viewBox="0 0 10 10"><circle cx="5" cy="5" r="3.600" fill="#4cc42a"/><path d="M3 5a2 2 0 0 1 3.600-1.200M7 5a2 2 0 0 1-3.600 1.200" stroke="#fff" stroke-width=".9" fill="none"/><path d="M6.200 2.500l1.200 1.300-1.700.3zM3.800 7.500L2.600 6.200l1.700-.3z" fill="#fff"/></svg>
<svg style="position:absolute;left:168.2px;top:304.8px;overflow:visible" width="8.600" height="8.600" viewBox="0 0 10 10"><path d="M.8 2h3l.8 1h4.600v5.500H.8z" fill="#f4c430"/><rect x="1.500" y="6.800" width="7" height="1.700" fill="#3b8de0"/></svg>
<svg style="position:absolute;left:185.7px;top:304.8px;overflow:visible" width="8.600" height="8.600" viewBox="0 0 10 10"><circle cx="5" cy="5" r="4" fill="#ea4335"/><path d="M5 5L1.500 3a4 4 0 0 0 1.700 5.600z" fill="#34a853"/><path d="M5 5l-1.800 3.600A4 4 0 0 0 9 5z" fill="#fbbc05"/><circle cx="5" cy="5" r="1.800" fill="#fff"/><circle cx="5" cy="5" r="1.400" fill="#4285f4"/></svg>
<svg style="position:absolute;left:204.2px;top:304.8px;overflow:visible" width="8.600" height="8.600" viewBox="0 0 10 10"><ellipse cx="4.300" cy="4.300" rx="3.300" ry="2.800" fill="#2dc100"/><ellipse cx="6.500" cy="6.200" rx="2.600" ry="2.200" fill="#f2f2f2"/></svg>
<svg style="position:absolute;left:222.7px;top:304.8px;overflow:visible" width="8.600" height="8.600" viewBox="0 0 10 10"><rect x=".8" y="1.300" width="8.400" height="7.400" rx="1" fill="#fff"/><path d="M1.500 2.500l1.600 4.500 1.200-3 1.200 3 1.600-4.500" stroke="#e5251d" stroke-width="1.200" fill="none"/><rect x="6.500" y="5.800" width="2.500" height="2.500" fill="#3faa3f"/></svg>
<svg style="position:absolute;left:240.7px;top:304.8px;overflow:visible" width="8.600" height="8.600" viewBox="0 0 10 10"><rect x=".8" y="1" width="8.400" height="8" rx="1.500" fill="#1e6fff"/><path d="M2.300 6.500c.5-1.800 1.800-1.800 2.700-.5.900-1.300 2.200-1.300 2.700.5z" fill="#fff"/></svg>
<div style="position:absolute;left:167px;top:315.2px;width:10px;height:0.8px;background:#4a90d9;"></div>
<div style="position:absolute;left:185.5px;top:315.2px;width:10px;height:0.8px;background:#4a90d9;"></div>
<div style="position:absolute;left:204px;top:315.2px;width:10px;height:0.8px;background:#4a90d9;"></div>
<div style="position:absolute;left:222.5px;top:315.2px;width:10px;height:0.8px;background:#4a90d9;"></div>
<div style="position:absolute;left:240.5px;top:315.2px;width:10px;height:0.8px;background:#4a90d9;"></div>
<svg style="position:absolute;left:454.5px;top:305.5px;overflow:visible;" width="8" height="6" viewBox="0 0 8 6"><path d="M1.200 4.200L4 1.500l2.800 2.700" stroke="#333" stroke-width=".8" fill="none"/></svg>
<svg style="position:absolute;left:469px;top:304.5px;overflow:visible;" width="8" height="8" viewBox="0 0 8 8"><path d="M1 1.500h6L4 6.500z" fill="#2fbf5a"/><path d="M3 2.500h2.600L4 5z" fill="#fff"/></svg>
<svg style="position:absolute;left:479.5px;top:303.5px;overflow:visible;" width="9" height="9" viewBox="0 0 9 9"><circle cx="4.500" cy="4.500" r="3.600" fill="#f2d21f"/><circle cx="4.500" cy="4.500" r="2.300" fill="#2f9e3a"/><path d="M3.400 3.600h2.200L3.400 5.500h2.200" stroke="#fff" stroke-width=".6" fill="none"/></svg>
<svg style="position:absolute;left:492px;top:305.500px;overflow:visible;" width="8" height="6" viewBox="0 0 8 6"><rect x=".6" y="1" width="6" height="3.800" fill="#222"/><rect x="3.600" y="1.800" width="2.300" height="2.200" fill="#fff"/></svg>
<svg style="position:absolute;left:503px;top:305px;overflow:visible;" width="8" height="7" viewBox="0 0 8 7"><path d="M1 2.700h1.300L4 1.200v4.600L2.300 4.300H1z" fill="#555"/><path d="M5 2.200c.6.700.6 1.900 0 2.600M6 1.400c1.100 1.200 1.100 3 0 4.200" stroke="#777" stroke-width=".5" fill="none"/></svg>
<svg width="1" height="1" style="position:absolute;left:512.5px;top:310.8px;overflow:visible;"><text x="0" y="0" font-size="6" fill="#222">中</text></svg>
<svg style="position:absolute;left:522.5px;top:304.5px;overflow:visible;" width="9" height="9" viewBox="0 0 9 9"><rect x=".8" y=".8" width="7.400" height="7.400" fill="#fff" stroke="#888" stroke-width=".5"/><path d="M4.500 2v3M3 4l1.500 1.500L6 4M2.500 6.800h4" stroke="#333" stroke-width=".7" fill="none"/></svg>
<div style="position:absolute;left:536.5px;top:303.3px;font:4.600px/5px 'Liberation Sans',sans-serif;color:#222;white-space:nowrap">16:06</div>
<div style="position:absolute;left:536.5px;top:309.8px;font:4.300px/5px 'Liberation Sans',sans-serif;color:#222;white-space:nowrap">2022/3/22</div>
<svg style="position:absolute;left:551.5px;top:303.5px;overflow:visible;" width="5" height="5" viewBox="0 0 5 5"><rect x=".6" y=".6" width="3.400" height="3.400" fill="none" stroke="#333" stroke-width=".5"/></svg>
<div style="position:absolute;left:559.5px;top:303px;width:1.6px;height:1.6px;background:#e81123;"></div>
</div>
<div style="position:absolute;left:564px;top:38px;width:140px;height:378px;background:linear-gradient(to right,#55575b 0,#4e5054 7px,#2e2f31 40px,#111112 85px,#000 115px);"></div>
<div style="position:absolute;left:564px;top:38px;width:140px;height:378px;overflow:hidden"><div style="position:absolute;left:-564px;top:-38px">
<div style="position:absolute;left:570px;top:26.25px;width:115.5px;height:63.4px;background:#1b1c1e;border:1px solid #16a04c;border-radius:2.500px;box-sizing:border-box"></div>
<div style="position:absolute;left:571.5px;top:73.7px;width:112.5px;height:15.3px;background:#0d0d0e;"></div>
<div style="position:absolute;left:572.5px;top:74px;width:14.5px;height:14px;background:#f5821f;"></div>
<svg style="position:absolute;left:574.3px;top:75.3px;overflow:visible;" width="11" height="12" viewBox="0 0 11 12"><circle cx="5.500" cy="3.300" r="2.500" fill="#fff"/><path d="M.5 11.200c0-3.300 2-5 5-5s5 1.700 5 5z" fill="#fff"/></svg>
<svg style="position:absolute;left:588px;top:75.5px;overflow:visible;" width="12" height="12" viewBox="0 0 12 12"><rect x="1" y="1.500" width="10" height="7" rx=".8" fill="#fff"/><path d="M4 6.500c.3-1.800 1.500-2.500 3-2.500V3l2 1.700L7 6.400v-1c-1.200 0-2.200.3-3 1.100z" fill="#111"/><path d="M3 10.800h6" stroke="#fff" stroke-width="1.100"/></svg>
<svg style="position:absolute;left:602px;top:75px;overflow:visible;" width="11" height="12" viewBox="0 0 11 12"><rect x="3" y=".3" width="5" height="7.600" rx="2.500" fill="#fff"/><path d="M1.200 5.300a4.300 4.300 0 0 0 8.600 0M5.500 9.800v1.600" stroke="#fff" stroke-width="1.250" fill="none"/></svg>
<svg width="1" height="1" style="position:absolute;left:615.8px;top:83.9px;overflow:visible;"><text x="0" y="0" font-size="7.64" fill="#ffffff">Quanquan的屏...</text></svg>
<div style="position:absolute;left:570px;top:97px;width:115.5px;height:63.4px;background:#26272a;border:1px solid #48494d;border-radius:2.500px;box-sizing:border-box"></div>
<div style="position:absolute;left:572px;top:143.8px;width:34.7px;height:15.8px;background:#0e0e0f;"></div>
<svg style="position:absolute;left:575px;top:146.2px;overflow:visible;" width="11" height="12" viewBox="0 0 11 12"><g transform="scale(1)"><rect x="3.200" y=".8" width="4.600" height="6.600" rx="2.300" fill="#ededee"/><path d="M1.600 5.300a3.900 3.900 0 0 0 7.800 0M5.500 9.200v1.500M4 10.900h3" stroke="#ededee" stroke-width="1" fill="none"/><path d="M1.200 10.300L9.800 1.400" stroke="#e8423a" stroke-width="1.100"/></g></svg>
<svg width="1" height="1" style="position:absolute;left:588.8px;top:155.2px;overflow:visible;"><text x="0" y="0" font-size="7.7" fill="#ffffff">阿白</text></svg>
<div style="position:absolute;left:570px;top:167.75px;width:115.5px;height:63.4px;background:#26272a;border:1px solid #48494d;border-radius:2.500px;box-sizing:border-box"></div>
<div style="position:absolute;left:572px;top:214.55px;width:30.7px;height:15.8px;background:#0e0e0f;"></div>
<svg style="position:absolute;left:575px;top:216.95px;overflow:visible;" width="11" height="12" viewBox="0 0 11 12"><g transform="scale(1)"><rect x="3.200" y=".8" width="4.600" height="6.600" rx="2.300" fill="#ededee"/><path d="M1.600 5.300a3.900 3.900 0 0 0 7.800 0M5.500 9.200v1.500M4 10.900h3" stroke="#ededee" stroke-width="1" fill="none"/><path d="M1.200 10.300L9.800 1.400" stroke="#e8423a" stroke-width="1.100"/></g></svg>
<svg width="1" height="1" style="position:absolute;left:588.8px;top:225.95px;overflow:visible;"><text x="0" y="0" font-size="7.7" fill="#ffffff">bin</text></svg>
<div style="position:absolute;left:570px;top:238.5px;width:115.5px;height:63.4px;background:#26272a;border:1px solid #48494d;border-radius:2.500px;box-sizing:border-box"></div>
<div style="position:absolute;left:572px;top:285.3px;width:75.7px;height:15.8px;background:#0e0e0f;"></div>
<svg style="position:absolute;left:575px;top:287.7px;overflow:visible;" width="11" height="12" viewBox="0 0 11 12"><g transform="scale(1)"><rect x="3.200" y=".8" width="4.600" height="6.600" rx="2.300" fill="#ededee"/><path d="M1.600 5.300a3.900 3.900 0 0 0 7.800 0M5.500 9.200v1.500M4 10.900h3" stroke="#ededee" stroke-width="1" fill="none"/><path d="M1.200 10.300L9.800 1.400" stroke="#e8423a" stroke-width="1.100"/></g></svg>
<svg width="1" height="1" style="position:absolute;left:588.8px;top:296.7px;overflow:visible;"><text x="0" y="0" font-size="7.7" fill="#ffffff">电信学院-谭相冠</text></svg>
<div style="position:absolute;left:570px;top:309.25px;width:115.5px;height:63.4px;background:#26272a;border:1px solid #48494d;border-radius:2.500px;box-sizing:border-box"></div>
<div style="position:absolute;left:572px;top:356.05px;width:34.7px;height:15.8px;background:#0e0e0f;"></div>
<svg style="position:absolute;left:575px;top:358.45px;overflow:visible;" width="11" height="12" viewBox="0 0 11 12"><g transform="scale(1)"><rect x="3.200" y=".8" width="4.600" height="6.600" rx="2.300" fill="#ededee"/><path d="M1.600 5.300a3.900 3.900 0 0 0 7.800 0M5.500 9.200v1.500M4 10.900h3" stroke="#ededee" stroke-width="1" fill="none"/><path d="M1.200 10.300L9.800 1.400" stroke="#e8423a" stroke-width="1.100"/></g></svg>
<svg width="1" height="1" style="position:absolute;left:588.8px;top:367.45px;overflow:visible;"><text x="0" y="0" font-size="7.7" fill="#ffffff">晴天</text></svg>
<div style="position:absolute;left:570px;top:380px;width:115.5px;height:63.4px;background:#26272a;border:1px solid #48494d;border-radius:2.500px;box-sizing:border-box"></div>
<svg style="position:absolute;left:609.5px;top:34.3px;overflow:visible;" width="37" height="37" viewBox="0 0 37 37"><defs><clipPath id="av1"><circle cx="18.500" cy="18.500" r="18.300"/></clipPath></defs><g clip-path="url(#av1)"><rect width="37" height="37" fill="#ececed"/><rect y="10" width="37" height="14.500" fill="#adadaf"/><rect y="24.500" width="37" height="13" fill="#e4e4e6"/>
<ellipse cx="21.800" cy="8.300" rx="5.300" ry="5.500" fill="#3b2b2a"/><ellipse cx="20.300" cy="9.300" rx="3.900" ry="4.300" fill="#dcaa92"/><path d="M17 6c1.500-2 4-2.500 6-1.500l-1 2.500c-1.500-.5-3-.3-4.500.5z" fill="#4a3836"/>
<path d="M7 14.500c1.500-2 3.500-1.500 5 0l4 3.500-2 3c-3-1.500-5-3.500-7-6.500z" fill="#dfa78c"/><path d="M25 16c3 0 6 2 8.500 5.500l-2.500 2c-2-2-4-3.500-7-4z" fill="#dfa78c"/>
<path d="M14.500 15.500c3-2 8-2.500 11-.5l.5 7c-4 1.500-8 1.500-12 0z" fill="#d42033"/><path d="M3 35c1-7 6-12 16-12 6 0 9 3 10 6l-4 9H3z" fill="#e2192c"/>
<path d="M27 27c2-1.500 5.500-1 7 2l-2 7-6 1z" fill="#e2b8a0"/><path d="M30 20c2-1 4 0 4.500 2l-2 3-3-1.500z" fill="#d8a890"/></g></svg>
<svg style="position:absolute;left:609.5px;top:105px;overflow:visible;" width="37" height="37" viewBox="0 0 37 37"><defs><clipPath id="av2"><circle cx="18.500" cy="18.500" r="18.300"/></clipPath></defs><g clip-path="url(#av2)"><rect width="37" height="37" fill="#f39b55"/>
<path d="M11 9.500c-2.500-4.500 1-7 4.500-3.500l2 3.500zM26 9.500c2.500-4.500-1-7-4.500-3.500l-2 3.500z" fill="#f0787c"/><circle cx="18.500" cy="9.300" r="2" fill="#e9656b"/>
<ellipse cx="18.500" cy="19.500" rx="13" ry="10.500" fill="#fff"/><ellipse cx="6.500" cy="23" rx="3.900" ry="6.500" fill="#fff" stroke="#c98a5a" stroke-width=".35" transform="rotate(10 6.500 23)"/><ellipse cx="30.500" cy="23" rx="3.900" ry="6.500" fill="#fff" stroke="#c98a5a" stroke-width=".35" transform="rotate(-10 30.500 23)"/>
<path d="M8 38c0-8 3-13 10.500-13S29 30 29 38z" fill="#fff"/>
<circle cx="14" cy="19" r="1.500" fill="#5a2d16"/><circle cx="23" cy="19" r="1.500" fill="#5a2d16"/><ellipse cx="18.500" cy="22.500" rx="1.700" ry="2.100" fill="#ef6b73"/>
<circle cx="12" cy="22.800" r="1.600" fill="#f9b6b6"/><circle cx="25" cy="22.800" r="1.600" fill="#f9b6b6"/>
<path d="M14.500 31v7M22.500 31v7" stroke="#d9a07a" stroke-width=".6"/></g></svg>
<svg style="position:absolute;left:609.5px;top:175.25px;overflow:visible;" width="37" height="37" viewBox="0 0 37 37"><defs><clipPath id="av3"><circle cx="18.500" cy="18.500" r="18.300"/></clipPath></defs><g clip-path="url(#av3)"><defs><linearGradient id="sky" x1="0" y1="0" x2="0" y2="1"><stop offset="0" stop-color="#9fcfb4"/><stop offset=".28" stop-color="#cfd9b2"/><stop offset=".38" stop-color="#ecd9a8"/><stop offset=".52" stop-color="#e0b66e"/><stop offset=".72" stop-color="#9a6a44"/><stop offset="1" stop-color="#3a2630"/></linearGradient>
<linearGradient id="road" x1="0" y1="0" x2="0" y2="1"><stop offset="0" stop-color="#5a3a3c"/><stop offset=".5" stop-color="#3b2631"/><stop offset="1" stop-color="#2c1b28"/></linearGradient></defs>
<rect width="37" height="37" fill="url(#sky)"/><path d="M18.500 11.500L-14 37h65z" fill="url(#road)"/><path d="M18.500 12L4 37h6zM18.500 12l14.500 25h-6z" fill="#6a4a40" opacity=".35"/>
<rect x="18.100" y="19.500" width=".8" height="2.200" fill="#e8b04a"/><rect x="17.900" y="25" width="1.300" height="3.400" fill="#f0b43a"/>
<text x="18.500" y="35" style="font-family:'Liberation Serif',serif" font-size="7.600" fill="#eadfe0" text-anchor="middle">Keep Going</text></g></svg>
<svg style="position:absolute;left:609.5px;top:246.5px;overflow:visible;" width="37" height="37" viewBox="0 0 37 37"><defs><clipPath id="av4"><circle cx="18.500" cy="18.500" r="18.300"/></clipPath></defs><g clip-path="url(#av4)"><rect width="37" height="37" fill="#bcbcbe"/><path d="M0 0h37v10L22 5 0 12z" fill="#cdcdcf"/>
<path d="M-1 24c6-3 12-3 16 0l8 1c5 0 9 1 15 4v9H-1z" fill="#9fa0a3"/><path d="M3 31c8-3 20-3 30 1v6H3z" fill="#a9aaad"/>
<path d="M3 20c2-3 7-4 11-2l1 6-7 4c-3-1-5-4-5-8z" fill="#f0c2aa"/>
<ellipse cx="18.500" cy="16" rx="6.600" ry="6.200" fill="#f1c6ae"/>
<path d="M8.500 13.500c-1-7 5-11.500 11-10.500 5 .8 8 5 7 9.500-5-3.500-11-3.500-18 1z" fill="#e6cfa4"/><path d="M9 13c3-2.500 6-3.500 9-3.500" stroke="#cdb384" stroke-width=".7" fill="none"/><path d="M5.500 15.500c-1.500-2.500-.5-5 2-5l1.500 4.500zM14 3.500l1.500-2.300 2 2z" fill="#e2c698"/>
<path d="M22 21c2.500 1 4.500 4 5 7.500l-3 1.500c-1-3-2.500-5-4.500-6z" fill="#f0c0a8"/><rect x="23.700" y="26.800" width="4.200" height="1.700" rx=".8" fill="#e2505a" transform="rotate(-18 26 27.500)"/>
<ellipse cx="31.500" cy="16.500" rx="4.300" ry="3.800" fill="#c8a070"/><circle cx="28.500" cy="13.200" r="1.600" fill="#bd935f"/><circle cx="34.500" cy="13.200" r="1.600" fill="#bd935f"/><ellipse cx="32" cy="22.500" rx="4.200" ry="3.800" fill="#c19865"/><ellipse cx="31.500" cy="17.500" rx="1.600" ry="1.100" fill="#e6d2b0"/>
<circle cx="16.800" cy="16" r=".75" fill="#3a3232"/><circle cx="21.300" cy="16.500" r=".75" fill="#3a3232"/><ellipse cx="19.500" cy="19.500" rx="1.100" ry=".6" fill="#d98a80"/></g></svg>
<svg style="position:absolute;left:609.5px;top:317.25px;overflow:visible;" width="37" height="37" viewBox="0 0 37 37"><defs><clipPath id="av5"><circle cx="18.500" cy="18.500" r="18.300"/></clipPath></defs><g clip-path="url(#av5)"><rect width="37" height="37" fill="#ffffff"/>
<path d="M6 16a12.500 12.500 0 0 1 25 0" fill="none" stroke="#e8403a" stroke-width="1.300"/><path d="M7.300 16a11.200 11.200 0 0 1 22.400 0" fill="none" stroke="#f5a623" stroke-width="1.200"/><path d="M8.500 16a10 10 0 0 1 20 0" fill="none" stroke="#f3dc3a" stroke-width="1.100"/><path d="M9.600 16a8.900 8.900 0 0 1 17.800 0" fill="none" stroke="#55c06a" stroke-width="1.100"/><path d="M10.700 16a7.800 7.800 0 0 1 15.600 0" fill="none" stroke="#4a90e2" stroke-width="1.100"/>
<ellipse cx="6.500" cy="14" rx="5" ry="2.800" fill="#b4cdf5"/><ellipse cx="30" cy="18.500" rx="5.500" ry="2.600" fill="#b4cdf5"/>
<ellipse cx="18.500" cy="15" rx="5.500" ry="4.500" fill="#a9c3f6"/><circle cx="13.500" cy="11.500" r="1.500" fill="#a9c3f6"/><circle cx="23.500" cy="11.500" r="1.500" fill="#a9c3f6"/>
<ellipse cx="18" cy="19.500" rx="6.500" ry="4.300" fill="#bcd2fa"/><path d="M12 24c0-3 3-4 6.500-4s6.500 1 6.500 4l1 8H11z" fill="#a6c0f5"/><rect x="11.500" y="28" width="3.500" height="5" rx="1.500" fill="#b0c8f7"/><rect x="21.500" y="28" width="3.500" height="5" rx="1.500" fill="#b0c8f7"/>
<circle cx="15.800" cy="14.800" r=".7" fill="#2a3a7a"/><circle cx="21" cy="14.800" r=".7" fill="#2a3a7a"/><circle cx="23.500" cy="18.500" r="1" fill="#f4a0b5"/>
<circle cx="7" cy="25" r="1" fill="#f3dc6a"/><circle cx="29" cy="27" r="1" fill="#9ad3a0"/><circle cx="9" cy="29" r=".9" fill="#f4a0b5"/><circle cx="27.500" cy="23" r=".9" fill="#f7c66a"/>
<path d="M8 33.500h21" stroke="#f5c9a8" stroke-width=".8"/></g></svg>
<svg style="position:absolute;left:609.5px;top:388px;overflow:visible;" width="37" height="37" viewBox="0 0 37 37"><defs><clipPath id="av6"><circle cx="18.500" cy="18.500" r="18.300"/></clipPath></defs><g clip-path="url(#av6)"><rect width="37" height="37" fill="#c88a2a"/><path d="M0 0h37v6H0z" fill="#dc4a3c"/><path d="M0 2.800h37" stroke="#ec7466" stroke-width=".9"/><path d="M0 5.600h37v4H0z" fill="#f3e9df"/><path d="M3 6.500h31v2.200H3z" fill="#5a2420" opacity=".8"/><path d="M6 6.500v2.200M10 6.500v2.200M14 6.500v2.200M18.500 6.500v2.200M23 6.500v2.200M27 6.500v2.200M31 6.500v2.200" stroke="#f3e9df" stroke-width=".7"/>
<path d="M0 9.600h37v1H0z" fill="#c03a2e"/>
<ellipse cx="18.500" cy="17" rx="15" ry="7" fill="#b9822a"/><ellipse cx="11" cy="15.500" rx="4.300" ry="2.800" fill="#4d3c2a"/><ellipse cx="26" cy="15.500" rx="4.300" ry="2.800" fill="#4d3c2a"/><circle cx="11.500" cy="15.500" r="1.200" fill="#e4e4e4"/><circle cx="25.500" cy="15.500" r="1.200" fill="#e4e4e4"/>
<circle cx="2.500" cy="13" r="3" fill="#9a6a22"/><circle cx="34.500" cy="13" r="3" fill="#9a6a22"/><ellipse cx="18.500" cy="20.300" rx="2.600" ry="1.400" fill="#6a3018"/>
<path d="M-1 21c5 1 7 5 7 16H-2zM38 21c-5 1-7 5-7 16h8z" fill="#f4a71c"/><path d="M5 22c1 1 2 3 2.500 6M32 22c-1 1-2 3-2.500 6" stroke="#8a4a12" stroke-width=".8" fill="none"/>
<path d="M7 37c0-9 4-14.500 11.500-14.500S30 28 30 37z" fill="#dcebfc"/><path d="M12 24c2-1.500 11-1.500 13 0l-2 2.500h-9z" fill="#fff"/>
<circle cx="14.500" cy="26.300" r="1.300" fill="#1a2aa0"/><circle cx="22.500" cy="26.300" r="1.300" fill="#1a2aa0"/></g></svg>
</div></div>
<div style="position:absolute;left:605px;top:44.5px;width:51.5px;height:14.5px;background:rgba(95,95,98,.15);border-radius:2px"></div>
<div style="position:absolute;left:605px;top:395.5px;width:51px;height:13.5px;background:rgba(45,45,47,.72);border-radius:2px"></div>
<svg style="position:absolute;left:624px;top:398.5px;overflow:visible;" width="9" height="7" viewBox="0 0 9 7"><path d="M1 1.500l3.500 3.500L8 1.500" stroke="#fff" stroke-width="1.200" fill="none"/></svg>
<div style="position:absolute;left:668px;top:52px;width:40px;height:26px;background:#2f3136;border-radius:3.500px 0 0 3.500px"></div>
<svg style="position:absolute;left:675px;top:58.5px;overflow:visible;" width="11" height="13" viewBox="0 0 11 13"><rect x="3.700" y="1" width="3.600" height="6.300" rx="1.800" fill="#7c7f86"/><path d="M2 5.800a3.500 3.500 0 0 0 7 0M5.500 9.300v1.700M3.800 11.200h3.400" stroke="#7c7f86" stroke-width=".9" fill="none"/><path d="M.8 11L10.200 1.200" stroke="#e4473c" stroke-width="1"/></svg>
<div style="position:absolute;left:553px;top:220.5px;width:11.5px;height:28.5px;background:linear-gradient(to right,#6c6c6d,#58585a);border-radius:3px 0 0 3px"></div>
<svg style="position:absolute;left:555.5px;top:229.5px;overflow:visible;" width="6" height="10" viewBox="0 0 6 10"><path d="M1.300 1l3.200 4-3.200 4" stroke="#c4c4c5" stroke-width=".9" fill="none"/></svg>
<div style="position:absolute;left:566px;top:227px;width:0.7px;height:16.5px;background:#c9c9ca;"></div>
<div style="position:absolute;left:568.1px;top:227px;width:0.7px;height:16.5px;background:#c9c9ca;"></div>
<div style="position:absolute;left:10px;top:343px;width:100px;height:21.5px;background:rgba(98,98,100,.86);border-radius:2.500px"></div>
<svg style="position:absolute;left:16px;top:347.5px;overflow:visible;" width="13" height="13" viewBox="0 0 13 13"><circle cx="6.500" cy="6.500" r="6.100" fill="#b7b7b8"/><circle cx="4.500" cy="5" r=".85" fill="#6f6f71"/><circle cx="8.500" cy="5" r=".85" fill="#6f6f71"/><path d="M3.200 7.300c.9 3 5.700 3 6.600 0z" fill="#6f6f71"/></svg>
<div style="position:absolute;left:32.5px;top:347.5px;width:0.6px;height:12.5px;background:rgba(255,255,255,.25);"></div>
<div style="position:absolute;left:88.5px;top:347.5px;width:0.6px;height:12.5px;background:rgba(255,255,255,.18);"></div>
<svg width="1" height="1" style="position:absolute;left:41.5px;top:357.8px;overflow:visible;"><text x="0" y="0" font-size="8.6" fill="rgba(214,214,215,.9)">说点什么...</text></svg>
<div style="position:absolute;left:0px;top:416px;width:692px;height:9px;background:#ffffff;"></div>
<svg style="position:absolute;left:0px;top:416px;overflow:visible;" width="692" height="9" viewBox="0 0 692 9"><circle cx="23.500" cy="8" r="2.200" fill="#2b2c30"/><circle cx="28.500" cy="8.300" r=".9" fill="#f03a34"/><rect x="61" y="7.500" width="9.500" height="2" fill="#3a3b40"/><circle cx="73.300" cy="8" r=".9" fill="#f03a34"/><rect x="211" y="7.700" width="16.500" height="1.500" fill="#4a4b50"/><circle cx="267" cy="8.500" r="1.500" fill="#2b2c30"/><circle cx="305" cy="8.500" r="1.500" fill="#2b2c30"/><rect x="338" y="7.700" width="13.500" height="1.500" fill="#4a4b50"/><circle cx="389" cy="12" r="4.600" fill="none" stroke="#3a3b40" stroke-width="1"/><path d="M434 9l3.500-2 3.500 2" stroke="#3a3b40" stroke-width="1" fill="none"/><rect x="470" y="6.800" width="6.500" height="3" rx="1" fill="#2b2c30"/><rect x="628.500" y="6.300" width="54.500" height="10" rx="3" fill="#fff" stroke="#f7a6a6" stroke-width="1"/></svg></div></body></html>
